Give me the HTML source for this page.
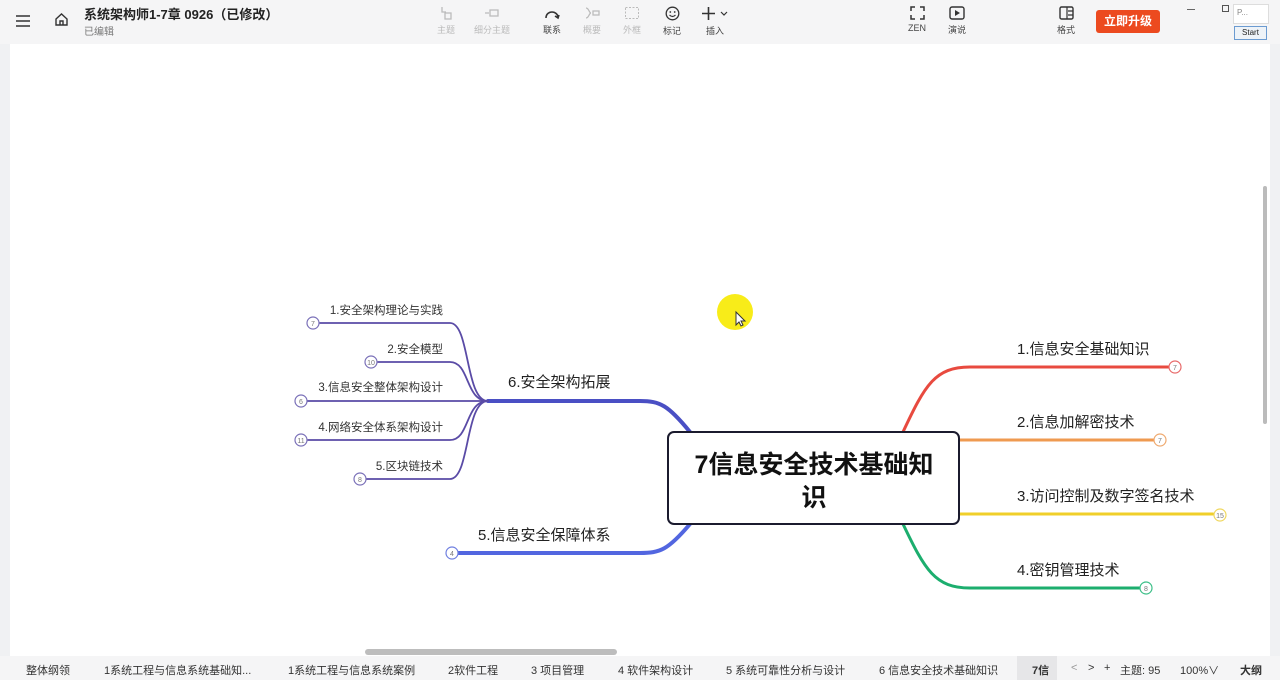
<!DOCTYPE html>
<html><head><meta charset="utf-8"><style>
*{margin:0;padding:0;box-sizing:border-box}
body{width:1280px;height:680px;overflow:hidden;background:#f0f1f3;font-family:"Liberation Sans","Noto Sans CJK SC",sans-serif;position:relative;color:#222}
.top{position:absolute;left:0;top:0;width:1280px;height:44px;background:#f5f5f6}
.t{position:absolute;white-space:nowrap}
.tb{position:absolute;top:6px;text-align:center;font-size:9px;color:#444;width:40px}
.tb.dis{color:#bbb}
.tb svg{display:block;margin:0 auto 3px}
.canvas{position:absolute;left:10px;top:44px;width:1260px;height:612px;background:#fff}
.bot{position:absolute;left:0;top:656px;width:1280px;height:24px;background:#f5f5f6;font-size:11px;color:#333}
.bot span{position:absolute;top:6px;white-space:nowrap}
</style></head><body>
<div class="top">
  <svg class="t" style="left:16px;top:15px" width="14" height="12"><path d="M0 1h14M0 6h14M0 11h14" stroke="#333" stroke-width="1.6"/></svg>
  <svg class="t" style="left:54px;top:12px" width="15" height="15"><path d="M2 7L7.5 2 13 7V13H2Z M6 13V9h3v4" fill="none" stroke="#333" stroke-width="1.4"/></svg>
  <div class="t" style="left:84px;top:4px;font-size:13px;font-weight:bold;color:#222">系统架构师1-7章 0926（已修改）</div>
  <div class="t" style="left:84px;top:23px;font-size:10px;color:#777">已编辑</div>
  <div class="tb dis" style="left:426px"><svg width="14" height="14"><path d="M3 1v5h4M6 7h6v6H6z" fill="none" stroke="#bbb" stroke-width="1.3"/></svg>主题</div>
  <div class="tb dis" style="left:472px;width:40px"><svg width="16" height="14"><path d="M1 7h4M6 4h8v6H6z" fill="none" stroke="#bbb" stroke-width="1.3"/></svg>细分主题</div>
  <div class="tb" style="left:532px"><svg width="16" height="14"><path d="M2 12C2 4 14 4 14 12M11 10l3 2 1-3" fill="none" stroke="#333" stroke-width="1.6"/></svg>联系</div>
  <div class="tb dis" style="left:572px"><svg width="16" height="14"><path d="M2 2c3 0 3 5 5 5-2 0-2 5-5 5M9 5h6v4H9z" fill="none" stroke="#bbb" stroke-width="1.3"/></svg>概要</div>
  <div class="tb dis" style="left:612px"><svg width="16" height="14"><rect x="1.5" y="1.5" width="13" height="11" fill="none" stroke="#bbb" stroke-dasharray="2 1.5"/></svg>外框</div>
  <div class="tb" style="left:652px"><svg width="15" height="15"><circle cx="7.5" cy="7.5" r="6.3" fill="none" stroke="#333" stroke-width="1.3"/><circle cx="5.3" cy="6" r=".9" fill="#333"/><circle cx="9.7" cy="6" r=".9" fill="#333"/><path d="M4.5 9q3 3 6 0" fill="none" stroke="#333" stroke-width="1.2"/></svg>标记</div>
  <div class="tb" style="left:695px"><svg width="28" height="15"><path d="M7.5 1v13M1 7.5h13" stroke="#333" stroke-width="1.6"/><path d="M20 6l3 3 3-3" fill="none" stroke="#333" stroke-width="1.2"/></svg>插入</div>
  <div class="tb" style="left:897px"><svg width="15" height="14"><path d="M1 5V1h4M10 1h4v4M14 9v4h-4M5 13H1V9" fill="none" stroke="#333" stroke-width="1.5"/></svg>ZEN</div>
  <div class="tb" style="left:937px"><svg width="16" height="14"><rect x="1" y="1" width="14" height="12" rx="2" fill="none" stroke="#333" stroke-width="1.4"/><path d="M6 4l5 3-5 3z" fill="#333"/></svg>演说</div>
  <div class="tb" style="left:1046px"><svg width="15" height="14"><rect x="1" y="1" width="13" height="12" rx="1.5" fill="none" stroke="#333" stroke-width="1.4"/><path d="M8 1v12M9 5h5M9 9h5" stroke="#333" stroke-width="1.2"/></svg>格式</div>
  <div class="t" style="left:1096px;top:10px;width:64px;height:23px;background:#ec4a1f;color:#fff;font-size:12px;font-weight:bold;text-align:center;line-height:23px;border-radius:3px">立即升级</div>
  <div class="t" style="left:1187px;top:9px;width:8px;height:1px;background:#666"></div>
  <div class="t" style="left:1222px;top:5px;width:7px;height:7px;border:1px solid #555"></div>
  <div class="t" style="left:1233px;top:4px;width:36px;height:20px;background:#fff;border:1px solid #ddd;font-size:8px;color:#888;padding:3px">P...</div>
  <div class="t" style="left:1234px;top:26px;width:33px;height:14px;background:#eef3f8;border:1px solid #6b9bd1;font-size:8px;text-align:center;line-height:12px">Start</div>
</div>
<div class="canvas"></div>
<div class="t" style="left:1263px;top:186px;width:4px;height:238px;background:#bbb;border-radius:2px"></div>
<div class="t" style="left:365px;top:649px;width:252px;height:6px;background:#bdbdbd;border-radius:3px"></div>
<svg class="t" style="left:0;top:0" width="1280" height="656" font-family="Liberation Sans, Noto Sans CJK SC, sans-serif">
  <circle cx="735" cy="312" r="18" fill="#f7ea00" opacity=".9"/>
  <path d="M736 312v13l3-3 2 4 2-1-2-4h4z" fill="#fff" stroke="#333" stroke-width="1"/>
  <g fill="none" stroke-linecap="round">
    <path d="M903 432C925 385 935 367 970 367H1169" stroke="#e84a3f" stroke-width="3"/>
    <path d="M959 440H1154" stroke="#ef9a50" stroke-width="3"/>
    <path d="M959 514H1213" stroke="#f0cf2a" stroke-width="3"/>
    <path d="M903 524C925 570 935 588 970 588H1140" stroke="#1cae6e" stroke-width="3"/>
    <path d="M690 432C668 405 660 401 640 401H488" stroke="#4a4fc4" stroke-width="4"/>
    <path d="M690 524C668 550 660 553 640 553H458" stroke="#5266e0" stroke-width="4"/>
    <g stroke="#5a4ba6" stroke-width="1.8">
      <path d="M488 401C465 401 470 323 450 323H320"/>
      <path d="M488 401C465 401 470 362 450 362H378"/>
      <path d="M488 401H307"/>
      <path d="M488 401C465 401 470 440 450 440H308"/>
      <path d="M488 401C465 401 470 479 450 479H366"/>
    </g>
  </g>
  <g fill="#fff" stroke-width="1.2">
    <circle cx="1175" cy="367" r="6" stroke="#e86a6a"/><circle cx="1160" cy="440" r="6" stroke="#efaa70"/>
    <circle cx="1220" cy="515" r="6" stroke="#f0d860"/><circle cx="1146" cy="588" r="6" stroke="#3cbf88"/>
    <circle cx="452" cy="553" r="6" stroke="#7080e0"/>
    <g stroke="#7a70b8"><circle cx="313" cy="323" r="6"/><circle cx="371" cy="362" r="6"/><circle cx="301" cy="401" r="6"/><circle cx="301" cy="440" r="6"/><circle cx="360" cy="479" r="6"/></g>
  </g>
  <g font-size="7" text-anchor="middle" fill="#777">
    <text x="1175" y="370">7</text><text x="1160" y="443">7</text><text x="1220" y="518">15</text><text x="1146" y="591">8</text><text x="452" y="556">4</text>
    <text x="313" y="326">7</text><text x="371" y="365">10</text><text x="301" y="404">6</text><text x="301" y="443">11</text><text x="360" y="482">8</text>
  </g>
  <rect x="668" y="432" width="291" height="92" rx="6" fill="#fff" stroke="#1b1b2e" stroke-width="2"/>
  <g font-size="25" font-weight="bold" text-anchor="middle" fill="#111"><text x="814" y="473">7信息安全技术基础知</text><text x="814" y="506">识</text></g>
  <g font-size="15" fill="#222">
    <text x="1017" y="354">1.信息安全基础知识</text><text x="1017" y="427">2.信息加解密技术</text>
    <text x="1017" y="501">3.访问控制及数字签名技术</text><text x="1017" y="575">4.密钥管理技术</text>
    <text x="508" y="387">6.安全架构拓展</text><text x="478" y="540">5.信息安全保障体系</text>
  </g>
  <g font-size="11.5" fill="#333" text-anchor="end">
    <text x="443" y="314">1.安全架构理论与实践</text><text x="443" y="353">2.安全模型</text>
    <text x="443" y="391">3.信息安全整体架构设计</text><text x="443" y="431">4.网络安全体系架构设计</text>
    <text x="443" y="470">5.区块链技术</text>
  </g>
</svg>
<div class="bot">
  <span style="left:26px">整体纲领</span><span style="left:104px">1系统工程与信息系统基础知...</span>
  <span style="left:288px">1系统工程与信息系统案例</span><span style="left:448px">2软件工程</span>
  <span style="left:531px">3 项目管理</span><span style="left:618px">4 软件架构设计</span>
  <span style="left:726px">5 系统可靠性分析与设计</span><span style="left:879px">6 信息安全技术基础知识</span>
  <span style="left:1017px;top:0;height:24px;width:40px;background:#e6e6e8;padding:6px 0 0 15px;font-weight:bold">7信</span>
  <span style="left:1071px;color:#999">&lt;</span><span style="left:1088px">&gt;</span><span style="left:1104px">+</span>
  <span style="left:1120px">主题: 95</span><span style="left:1180px">100%∨</span>
  <span style="left:1240px;font-weight:bold">大纲</span>
</div>
</body></html>
